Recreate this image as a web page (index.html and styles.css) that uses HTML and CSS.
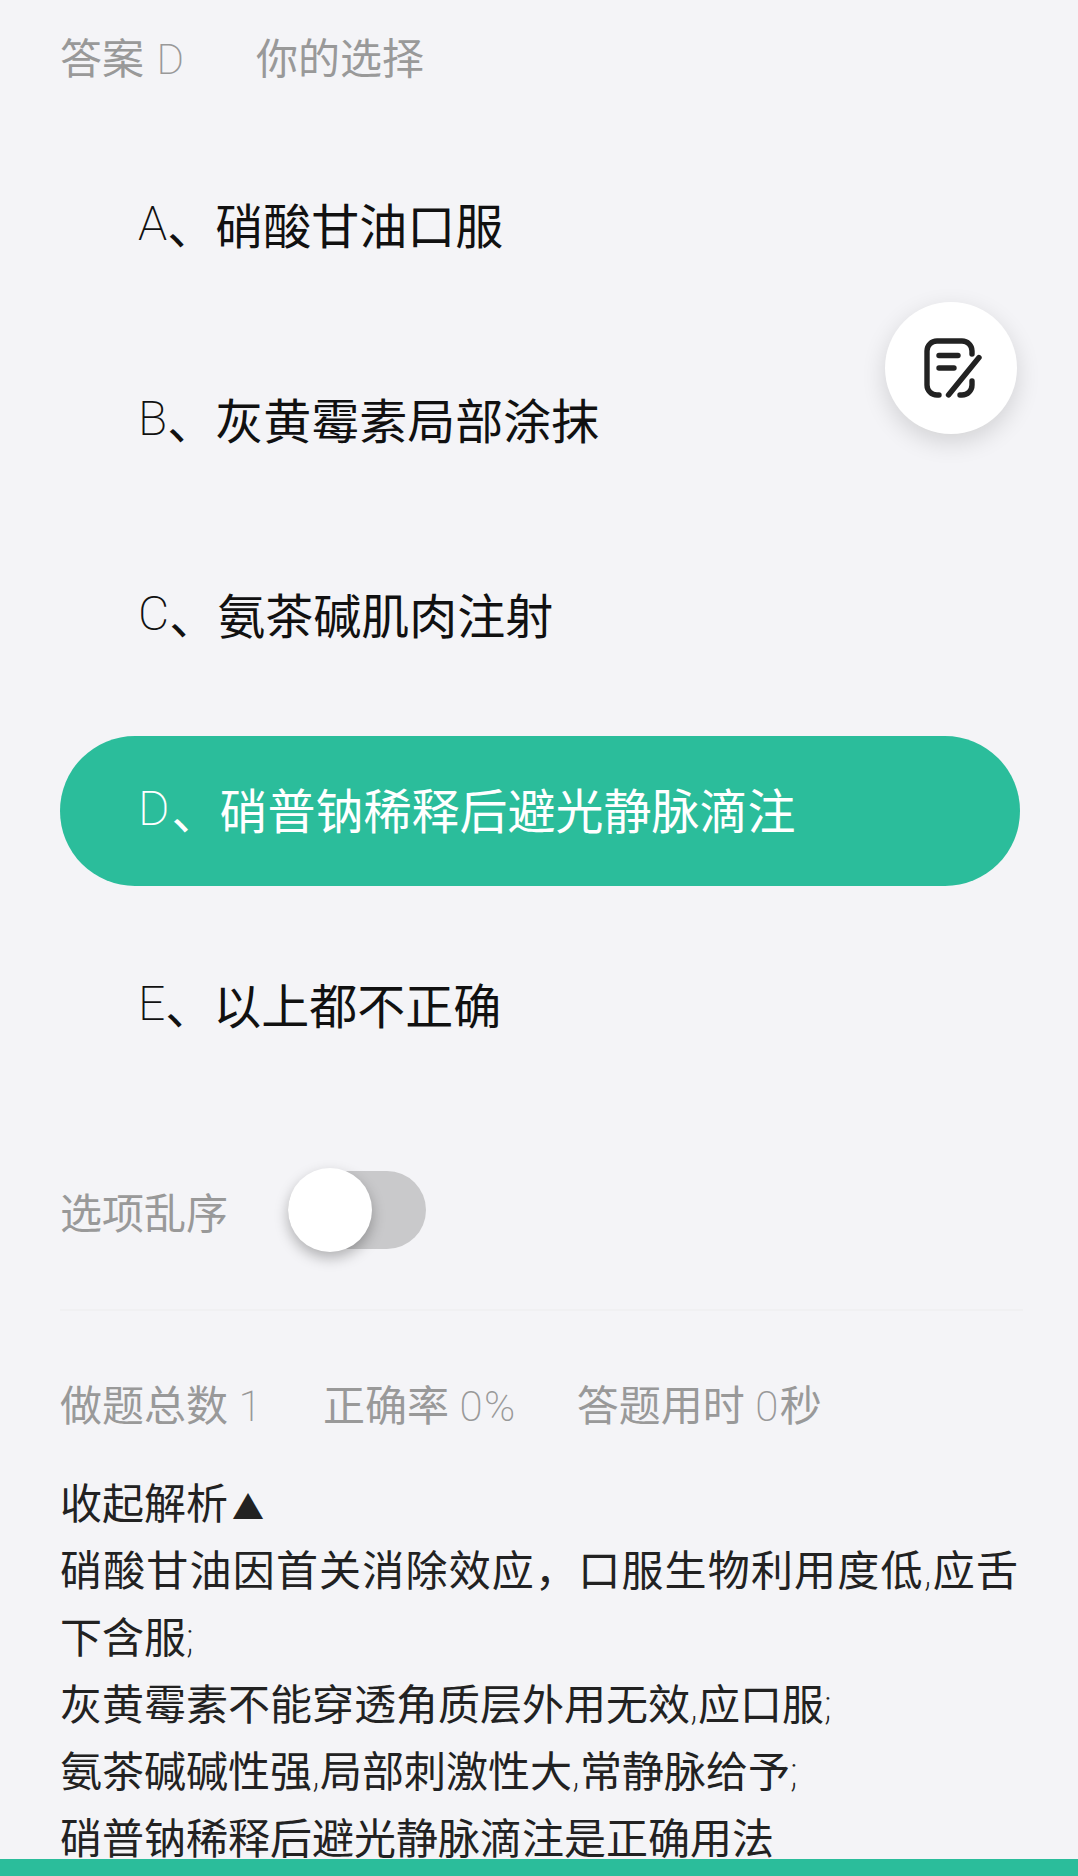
FILE: index.html
```html
<!DOCTYPE html>
<html lang="zh-CN">
<head>
    <meta charset="UTF-8">
    <title>做题</title>
    <link rel="stylesheet" href="styles.css">
</head>
<body>

<div class="page">
    <div class="content">
        <div class="top-row">
            <span class="answer">答案 <span class="lat">D</span></span>
            <span>你的选择</span>
        </div>

        <div class="options">
            <div class="option"><span class="lat">A</span>、硝酸甘油口服</div>
            <div class="option"><span class="lat">B</span>、灰黄霉素局部涂抹</div>
            <div class="option"><span class="lat">C</span>、氨茶碱肌肉注射</div>
            <div class="option active"><span class="lat">D</span>、硝普钠稀释后避光静脉滴注</div>
            <div class="option"><span class="lat">E</span>、以上都不正确</div>
        </div>

        <div class="shuffle-row">
            <span>选项乱序</span>
            <div class="switch">
                <div class="knob"></div>
            </div>
        </div>

        <div class="stats-row">
            <span>做题总数 <span class="lat">1</span></span>
            <span>正确率 <span class="lat">0%</span></span>
            <span>答题用时 <span class="lat">0</span>秒</span>
        </div>

        <div class="analysis">
            <div>收起解析<span class="arrow">▲</span></div>
            <div>硝酸甘油因首关消除效应，口服生物利用度低<span class="lat">,</span>应舌下含服<span class="lat">;</span></div>
            <div>灰黄霉素不能穿透角质层外用无效<span class="lat">,</span>应口服<span class="lat">;</span></div>
            <div>氨茶碱碱性强<span class="lat">,</span>局部刺激性大<span class="lat">,</span>常静脉给予<span class="lat">;</span></div>
            <div>硝普钠稀释后避光静脉滴注是正确用法</div>
        </div>
    </div>

    <div class="bottom-bar"></div>

    <div class="fab">
        <svg class="fab-icon" viewBox="60 56 62 64" width="62" height="64" fill="none" stroke="#222" stroke-width="5.4" stroke-linecap="round" stroke-linejoin="round">
            <path d="M112 74V71a10 10 0 0 0-10-10H77a10 10 0 0 0-10 10V105a10 10 0 0 0 10 10h2"/>
            <path d="M112 101v4a10 10 0 0 1-10 10h-2"/>
            <path d="M79 75.5H98"/>
            <path d="M79 88H94"/>
            <path d="M88.500 115L119 77.500"/>
        </svg>
    </div>
</div>

</body>
</html>
```

FILE: styles.css
```css
* {
    box-sizing: border-box;
}

html, body {
    margin: 0;
    padding: 0;
}

body {
    background-color: #f4f4f7;
    font-family: "Roboto", "Noto Sans CJK SC", sans-serif;
}

.lat {
    font-weight: 200;
}

.page {
    position: relative;
    display: flex;
    flex-direction: column;
    width: 1078px;
    height: 1876px;
    overflow: hidden;
}

.content {
    flex: 1;
    min-height: 0;
    overflow: hidden;
    padding: 27px 60px 0 60px;
}

.top-row {
    display: flex;
    gap: 72px;
    height: 56px;
    align-items: center;
    font-size: 42px;
    color: #999;
}

.answer {
    word-spacing: 2px;
}

.options {
    display: flex;
    flex-direction: column;
    gap: 45px;
    margin-top: 68px;
    margin-right: -2px;
}

.option {
    display: flex;
    align-items: center;
    height: 150px;
    padding-left: 78px;
    padding-bottom: 6px;
    border-radius: 75px;
    font-size: 48px;
    color: #111;
}

.option.active {
    background-color: #2bbd9b;
    color: #fff;
}

.option.active .lat {
    margin-right: 2px;
}

.shuffle-row {
    display: flex;
    align-items: center;
    gap: 60px;
    height: 84px;
    margin-top: 87px;
    font-size: 42px;
    color: #999;
}

.switch {
    position: relative;
    width: 138px;
    height: 78px;
    border-radius: 39px;
    background-color: #c9c9cb;
}

.knob {
    position: absolute;
    left: 0;
    top: -3px;
    width: 84px;
    height: 84px;
    border-radius: 50%;
    background-color: #fff;
    box-shadow: 0 6px 14px rgba(0, 0, 0, 0.28);
}

.stats-row {
    display: flex;
    gap: 60px;
    align-items: center;
    height: 184px;
    margin-top: 57px;
    margin-right: -5px;
    border-top: 2px solid #f0f0f2;
    font-size: 42px;
    color: #999;
}

.stats-row .lat {
    letter-spacing: 1.5px;
}

.analysis {
    margin-top: -22px;
    font-size: 42px;
    line-height: 67px;
    text-align: justify;
    color: #222;
}

.arrow {
    margin-left: 4px;
    font-size: 32px;
    line-height: 1;
}

.bottom-bar {
    flex: none;
    height: 17px;
    background-color: #2bbd9b;
}

.fab {
    position: absolute;
    left: 885px;
    top: 302px;
    display: flex;
    align-items: center;
    justify-content: center;
    width: 132px;
    height: 132px;
    border-radius: 50%;
    background-color: #fff;
    box-shadow: 0 8px 24px rgba(0, 0, 0, 0.14);
}
```
